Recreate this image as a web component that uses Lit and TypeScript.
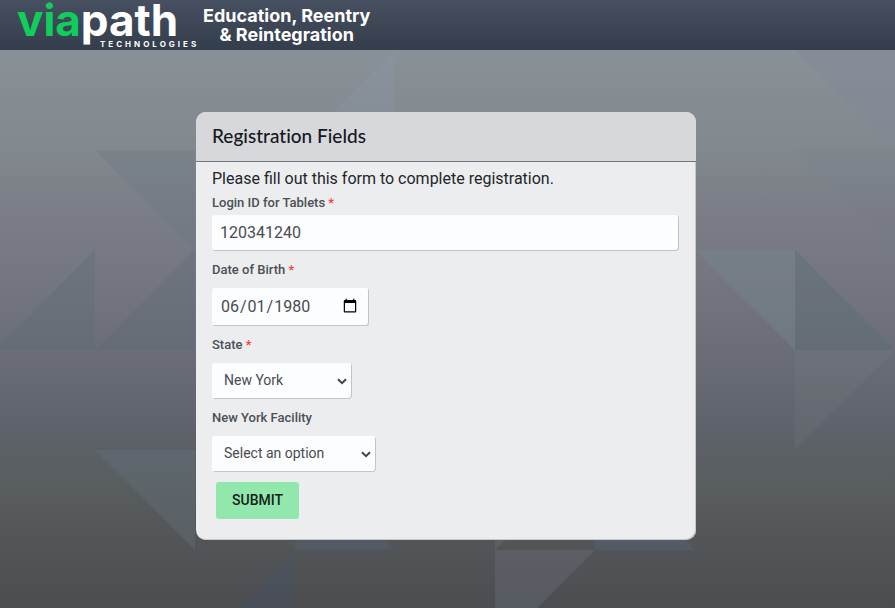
import { LitElement, html, css, svg } from "lit";
import { customElement, state } from "lit/decorators.js";

interface Facet {
  points: string;
  fill: string;
}

// Triangles of the faceted backdrop, on a 100px grid.
const FACETS: Facet[] = [
  { points: "395,0 395,100 295,100", fill: "rgba(145,157,178,0.2)" },
  { points: "795,0 895,0 895,100", fill: "rgba(130,134,152,0.4)" },
  { points: "795,100 895,100 895,200", fill: "rgba(112,124,134,0.12)" },
  { points: "95,100 195,100 195,200", fill: "rgba(104,118,124,0.28)" },
  { points: "95,200 95,300 -5,300", fill: "rgba(90,106,114,0.26)" },
  { points: "195,200 195,300 95,300", fill: "rgba(90,106,114,0.26)" },
  { points: "695,200 795,200 795,300", fill: "rgba(122,138,142,0.38)" },
  { points: "795,200 795,300 895,300", fill: "rgba(90,106,116,0.36)" },
  { points: "795,300 895,300 795,400", fill: "rgba(118,132,136,0.2)" },
  { points: "95,400 195,400 195,500", fill: "rgba(104,118,134,0.3)" },
  { points: "295,500 295,600 195,600", fill: "rgba(68,84,104,0.26)" },
  { points: "295,400 295,500 395,500", fill: "rgba(86,100,124,0.34)" },
  { points: "495,400 595,400 495,500", fill: "rgba(120,126,128,0.26)" },
  { points: "495,500 595,500 495,600", fill: "rgba(112,118,132,0.32)" },
  { points: "595,400 595,500 695,500", fill: "rgba(92,106,128,0.32)" },
];

@customElement("app-root")
export class AppRoot extends LitElement {
  @state() private facilityState = "New York";

  static styles = css`
    :host {
      display: flex;
      flex-direction: column;
      min-height: 100vh;
      font-family: Roboto, "Liberation Sans", sans-serif;
      color: #24262a;
    }
    * {
      box-sizing: border-box;
    }
    .topbar {
      display: flex;
      height: 50px;
      padding-left: 17px;
      background: linear-gradient(#465060, #333d4b);
      color: #fff;
    }
    .logo {
      position: relative;
      width: 186px;
      color: #fff;
      text-decoration: none;
      font-family: Inter, sans-serif;
    }
    .wordmark {
      display: block;
      font-size: 44px;
      line-height: 40px;
      font-weight: 700;
      white-space: nowrap;
    }
    .green {
      color: #0fce5c;
    }
    .sub {
      position: absolute;
      left: 83px;
      top: 38px;
      font-size: 8px;
      line-height: 12px;
      font-weight: 700;
      letter-spacing: 3px;
    }
    .tagline {
      margin: 0;
      padding-top: 6px;
      font-family: Inter, sans-serif;
      font-size: 18px;
      line-height: 19px;
      font-weight: 700;
      text-align: center;
    }
    .page {
      position: relative;
      flex: 1;
      padding: 62px 3px 68px 0;
      background: linear-gradient(
        #889197,
        #81888e 18%,
        #7b7e86 28%,
        #73767e 42%,
        #696c75 56%,
        #5d6169 69%,
        #5a5f61 76%,
        #54575a 86%,
        #4b4d51
      );
      overflow: hidden;
    }
    .facets {
      position: absolute;
      inset: 0;
      width: 100%;
      height: 100%;
    }
    .card {
      position: relative;
      max-width: 500px;
      margin: 0 auto;
      border-radius: 10px;
      background: #ebedee;
      box-shadow: inset -1px -1px #c4c8ca;
      overflow: hidden;
    }
    .title {
      margin: 0;
      height: 50px;
      padding: 0 16px;
      border-bottom: 1px solid #707780;
      background: #d7d8dc;
      font-family: Lato, sans-serif;
      font-size: 19px;
      line-height: 48px;
      font-weight: 500;
      font-variant-ligatures: none;
      color: #15181c;
    }
    .form {
      display: flex;
      flex-direction: column;
      align-items: flex-start;
      gap: 9px;
      padding: 5px 17px 21px 16px;
    }
    .intro {
      width: 100%;
    }
    .lead {
      margin: 0 0 2px;
      font-size: 16px;
      line-height: 24px;
    }
    .field {
      display: flex;
      flex-direction: column;
      align-items: flex-start;
      gap: 8px;
    }
    .field.tight {
      gap: 2px;
    }
    .label {
      font-size: 13px;
      line-height: 20px;
      font-weight: 500;
      color: #4c5056;
    }
    .required {
      color: #ff3b40;
    }
    .control {
      height: 36px;
      border: 0;
      border-radius: 3px;
      background-color: #fcfdfe;
      box-shadow: inset -1px -1px #c3c5c8;
      font-family: inherit;
      font-size: 16px;
      color: #484c50;
    }
    .text {
      width: 100%;
      padding: 0 8px 2px;
    }
    .date {
      width: 157px;
      height: 38px;
      padding: 0 9px 2px 8px;
    }
    .select {
      appearance: none;
      padding: 0 24px 2px 12px;
      font-size: 14px;
      background-image: url("data:image/svg+xml,%3Csvg xmlns='http://www.w3.org/2000/svg' width='10' height='7'%3E%3Cpath d='M1 1.2 5 5.2 9 1.2' fill='none' stroke='%23404347' stroke-width='2'/%3E%3C/svg%3E");
      background-repeat: no-repeat;
      background-position: right 5px top 15px;
    }
    .state {
      width: 140px;
    }
    .facility {
      width: 164px;
    }
    .submit {
      height: 37px;
      margin: 1px 4px 0;
      padding: 0 16px 2px;
      border: 0;
      border-radius: 3px;
      background: #92e8ac;
      font-family: inherit;
      font-size: 14px;
      font-weight: 500;
      color: #14221a;
    }
  `;

  private onState(e: Event) {
    this.facilityState = (e.target as HTMLSelectElement).value;
  }

  render() {
    return html`
      <header class="topbar">
        <a class="logo" href="#">
          <span class="wordmark"><span class="green">via</span>path</span>
          <span class="sub">TECHNOLOGIES</span>
        </a>
        <p class="tagline">Education, Reentry<br />&amp; Reintegration</p>
      </header>
      <main class="page">
        <svg class="facets" aria-hidden="true">
          ${FACETS.map((f) => svg`<polygon points=${f.points} fill=${f.fill}></polygon>`)}
        </svg>
        <section class="card">
          <h1 class="title">Registration Fields</h1>
          <form class="form" @submit=${(e: Event) => e.preventDefault()}>
            <div class="intro">
              <p class="lead">Please fill out this form to complete registration.</p>
              <div class="field tight">
                <label class="label" for="login">Login ID for Tablets <span class="required">*</span></label>
                <input class="control text" id="login" type="text" value="120341240" />
              </div>
            </div>
            <div class="field">
              <label class="label" for="dob">Date of Birth <span class="required">*</span></label>
              <input class="control date" id="dob" type="date" value="1980-06-01" />
            </div>
            <div class="field">
              <label class="label" for="state">State <span class="required">*</span></label>
              <select class="control select state" id="state" @change=${this.onState}>
                <option>New York</option>
              </select>
            </div>
            <div class="field">
              <label class="label" for="facility">${this.facilityState} Facility</label>
              <select class="control select facility" id="facility">
                <option>Select an option</option>
              </select>
            </div>
            <button class="submit" type="submit">SUBMIT</button>
          </form>
        </section>
      </main>
    `;
  }
}
